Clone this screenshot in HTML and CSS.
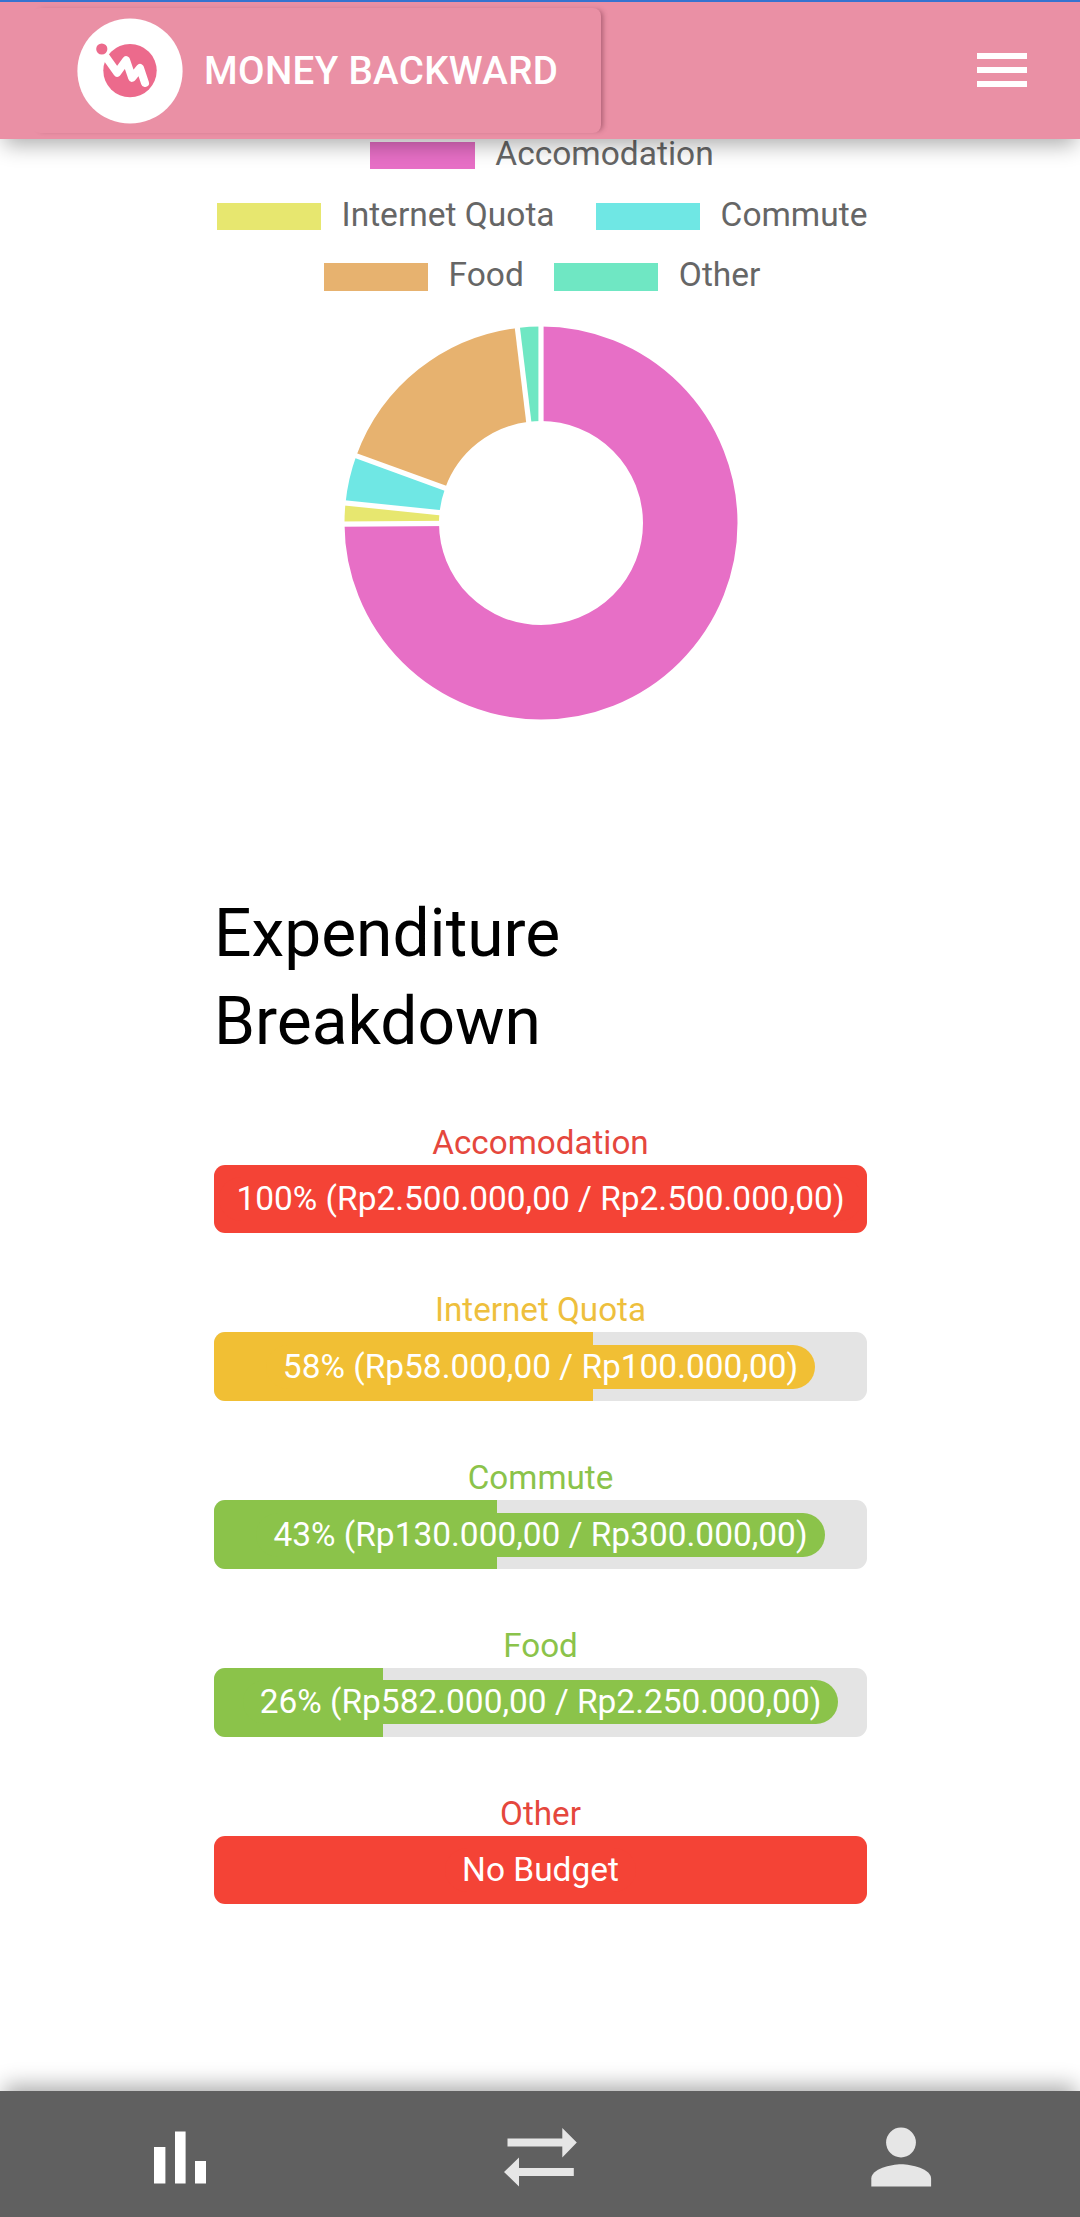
FILE: index.html
```html
<!DOCTYPE html>
<html lang="en">
<head>
<meta charset="utf-8">
<title>Money Backward</title>
<link rel="stylesheet" href="styles.css">
</head>
<body>
<div class="app">
  <header class="topbar">
    <a class="brand">
      <svg class="brand-logo" viewBox="0 0 106 106">
        <circle cx="53" cy="53" r="52.6" fill="#fff"/>
        <circle cx="53" cy="52.6" r="26.7" fill="#ec6a8c"/>
        <path d="M29 39L40.2 54.7L49.1 42.3L55.1 59.8L63 50L68 65" fill="none" stroke="#fff" stroke-width="8" stroke-linecap="round" stroke-linejoin="round"/>
        <circle cx="24.8" cy="31" r="5.6" fill="#ec6a8c"/>
      </svg>
      <span class="brand-name">MONEY BACKWARD</span>
    </a>
    <svg class="menu" viewBox="0 0 50 35"><path d="M0 0h50v6H0zM0 14h50v6H0zM0 28h50v6H0z" fill="#fff"/></svg>
  </header>

  <main class="content">
    <div class="legend">
      <div class="legend-row">
        <span class="key"><i class="swatch magenta"></i>Accomodation</span>
      </div>
      <div class="legend-row wide">
        <span class="key"><i class="swatch yellow"></i>Internet Quota</span>
        <span class="key"><i class="swatch cyan"></i>Commute</span>
      </div>
      <div class="legend-row">
        <span class="key"><i class="swatch orange"></i>Food</span>
        <span class="key"><i class="swatch mint"></i>Other</span>
      </div>
    </div>

    <svg class="donut" viewBox="-200 -200 400 400">
      <g transform="rotate(-90)" fill="none" stroke-width="94.5">
        <circle r="149.25" pathLength="360" stroke="#e76fc6" stroke-dasharray="269.7 360"/>
        <circle r="149.25" pathLength="360" stroke="#e7e76f" stroke-dasharray="6.15 360" stroke-dashoffset="-269.7"/>
        <circle r="149.25" pathLength="360" stroke="#6fe7e4" stroke-dasharray="14.15 360" stroke-dashoffset="-275.85"/>
        <circle r="149.25" pathLength="360" stroke="#e7b26f" stroke-dasharray="63.1 360" stroke-dashoffset="-290"/>
        <circle r="149.25" pathLength="360" stroke="#6fe7c3" stroke-dasharray="7.05 360" stroke-dashoffset="-353.1"/>
      </g>
      <g stroke="#fff" stroke-width="5.2">
        <path d="M0 -90V-200"/>
        <path d="M0 -90V-200" transform="rotate(269.7)"/>
        <path d="M0 -90V-200" transform="rotate(275.85)"/>
        <path d="M0 -90V-200" transform="rotate(290)"/>
        <path d="M0 -90V-200" transform="rotate(353.1)"/>
      </g>
    </svg>

    <section class="breakdown">
      <h1 class="heading">Expenditure Breakdown</h1>
      <div class="budget red">
        <div class="name">Accomodation</div>
        <div class="bar"><div class="fill" style="width:100%"></div><span class="amount">100% (Rp2.500.000,00 / Rp2.500.000,00)</span></div>
      </div>
      <div class="budget amber">
        <div class="name">Internet Quota</div>
        <div class="bar"><div class="fill" style="width:58%"></div><span class="amount">58% (Rp58.000,00 / Rp100.000,00)</span></div>
      </div>
      <div class="budget green">
        <div class="name">Commute</div>
        <div class="bar"><div class="fill" style="width:43.33%"></div><span class="amount">43% (Rp130.000,00 / Rp300.000,00)</span></div>
      </div>
      <div class="budget green">
        <div class="name">Food</div>
        <div class="bar"><div class="fill" style="width:25.87%"></div><span class="amount">26% (Rp582.000,00 / Rp2.250.000,00)</span></div>
      </div>
      <div class="budget red">
        <div class="name">Other</div>
        <div class="bar"><div class="fill" style="width:100%"></div><span class="amount">No Budget</span></div>
      </div>
    </section>
  </main>

  <nav class="tabs">
    <a class="tab active"><svg viewBox="0 0 80 66"><path d="M14 23h11.4v36.5H14zM35 7.5h10.6v52H35zM55 37h11v22.5H55z"/></svg></a>
    <a class="tab"><svg viewBox="0 0 80 66"><path d="M7.5 14.5h54.8V4L76.8 18.5L62.3 33.5V22.5H7.5zM73.8 44H19V33.5L4 48L19 62.5V52H73.8z"/></svg></a>
    <a class="tab"><svg viewBox="0 0 80 66"><circle cx="41" cy="18.5" r="14.9"/><path d="M11.3 62.5V54.5C11.3 45 31 40.2 41.2 40.2S71.1 45 71.1 54.5V62.5z"/></svg></a>
  </nav>
</div>
</body>
</html>
```
FILE: styles.css
```css
* {
  box-sizing: border-box;
}

body {
  margin: 0;
  background: #fff;
  font-family: Roboto, sans-serif;
}

.app {
  display: flex;
  flex-direction: column;
  height: 2217px;
  overflow: hidden;
}

/* Top bar */
.topbar {
  position: relative;
  z-index: 2;
  display: flex;
  align-items: center;
  justify-content: space-between;
  flex: none;
  height: 139px;
  padding: 0 53px 0 32px;
  border-top: 2px solid #3573d0;
  background: #ea90a5;
  box-shadow: 0 10px 20px -4px rgba(0, 0, 0, .32);
}

.brand {
  display: flex;
  align-items: center;
  gap: 21.5px;
  width: 569px;
  height: 125px;
  padding-left: 44.5px;
  border-radius: 8px;
  box-shadow: 4px 0 5px -2px rgba(90, 30, 50, .42);
}

.brand-logo {
  width: 106px;
  height: 106px;
}

.brand-name {
  color: #fff;
  font-size: 38.5px;
  font-weight: 500;
  letter-spacing: .35px;
  line-height: 50px;
  white-space: nowrap;
}

.menu {
  width: 50px;
  height: 35px;
}

/* Chart */
.content {
  flex: 1;
  min-height: 0;
}

.legend {
  display: flex;
  flex-direction: column;
  margin-top: -15.3px;
}

.legend-row {
  display: flex;
  justify-content: center;
  gap: 30px;
  height: 60.7px;
  padding-left: 4px;
}

.legend-row.wide {
  gap: 41px;
}

.key {
  display: flex;
  align-items: center;
  gap: 20.5px;
  color: #666;
  font-size: 33.5px;
  line-height: 30px;
}

.swatch {
  width: 104.5px;
  height: 27.3px;
  margin-top: 3px;
}

.magenta { background: #e76fc6; }
.yellow { background: #e7e76f; }
.cyan { background: #6fe7e4; }
.orange { background: #e7b26f; }
.mint { background: #6fe7c3; }

.donut {
  display: block;
  width: 400px;
  height: 400px;
  margin: 16.8px 0 0 340.8px;
}

/* Breakdown */
.breakdown {
  width: 653px;
  margin: 167.2px 0 0 214px;
}

.heading {
  margin: 0 0 54.9px;
  color: #000;
  font-size: 65.9px;
  font-weight: 400;
  line-height: 88px;
}

.budget {
  height: 167.8px;
  font-size: 33.2px;
  text-align: center;
}

.name {
  height: 44px;
  line-height: 44px;
}

.bar {
  display: grid;
  align-items: center;
  justify-items: center;
  height: 68.6px;
  border-radius: 11px;
  background: #e4e4e4;
  overflow: hidden;
}

.fill,
.amount {
  grid-area: 1 / 1;
}

.fill {
  justify-self: start;
  height: 68.6px;
}

.amount {
  height: 44px;
  padding: 0 17px;
  border-radius: 22px;
  color: #fff;
  font-size: 33.45px;
  line-height: 44px;
  white-space: nowrap;
}

.red .name { color: #e5473d; }
.red .fill,
.red .amount { background: #f44336; }

.amber .name { color: #eebf3d; }
.amber .fill,
.amber .amount { background: #f1bf34; }

.green .name { color: #8bc34a; }
.green .fill,
.green .amount { background: #8bc34a; }

/* Bottom tabs */
.tabs {
  position: relative;
  z-index: 2;
  display: grid;
  grid-template-columns: repeat(3, 1fr);
  flex: none;
  height: 126px;
  background: #606060;
  box-shadow: 0 -10px 20px -4px rgba(0, 0, 0, .32);
}

.tab {
  display: flex;
  justify-content: center;
  padding-top: 33px;
}

.tab svg {
  width: 80px;
  height: 66px;
  fill: #e6e6e6;
}

.tab.active svg {
  fill: #fff;
}
```
